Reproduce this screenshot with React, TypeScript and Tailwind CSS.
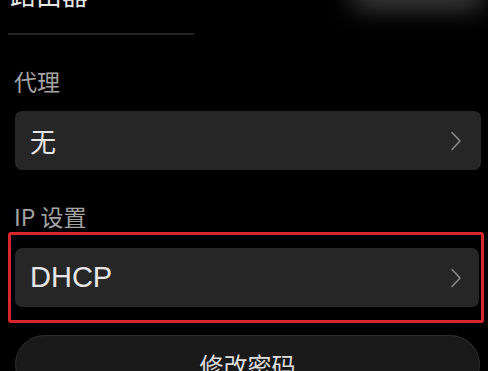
import React from "react";

function Chevron() {
  return (
    <svg width="12" height="20" viewBox="0 0 12 20" fill="none" className="shrink-0">
      <path d="M2 1.5 L10 10 L2 18.5" stroke="#8a8a8a" strokeWidth="1.6" strokeLinecap="round" strokeLinejoin="round" />
    </svg>
  );
}

export default function App() {
  return (
    <div className="relative w-[488px] h-[371px] overflow-hidden bg-black font-['Noto_Sans_CJK_SC',sans-serif]">
      {/* blurred glow at top right */}
      <div className="absolute top-[-22px] left-[350px] w-[135px] h-[32px] rounded-full bg-[#3a3a3a] blur-md" />

      {/* title */}
      <div className="h-[33px] pl-[10px] flex flex-col">
        <span className="mt-[-19px] text-[26px] leading-[26px] text-[#e8e8e8]">路由器</span>
      </div>
      <div className="ml-[8px] w-[186px] h-[2px] bg-[#232323]" />

      {/* 代理 */}
      <div className="mt-[35px] pl-[14px] text-[23px] leading-[23px] text-[#a3a3a3]">代理</div>
      <div className="mt-[18px] ml-[15px] mr-[7px] h-[59px] rounded-[7px] bg-[#262626] flex items-center justify-between pl-[15px] pr-[19px]">
        <span className="text-[26px] leading-none text-[#e6e6e6]">无</span>
        <Chevron />
      </div>

      {/* IP 设置 */}
      <div className="mt-[35px] pl-[14px] text-[23px] leading-[23px] text-[#a3a3a3]">IP 设置</div>
      <div className="mt-[4px] ml-[8px] mr-[4px] border-[3px] border-[#d8262f] rounded-[3px] pt-[13px] pb-[13px] pl-[4px] pr-[2px]">
        <div className="h-[59px] rounded-[7px] bg-[#262626] flex items-center justify-between pl-[15px] pr-[17px]">
          <span className="font-['Liberation_Sans',sans-serif] text-[29px] leading-none text-[#e6e6e6]">DHCP</span>
          <Chevron />
        </div>
      </div>

      {/* 修改密码 */}
      <div className="mt-[12px] ml-[15px] mr-[8px] h-[59px] rounded-full border border-[#2e2e2e] bg-[#1a1a1a] flex items-center justify-center">
        <span className="text-[24px] leading-none text-[#dedede]">修改密码</span>
      </div>
    </div>
  );
}
